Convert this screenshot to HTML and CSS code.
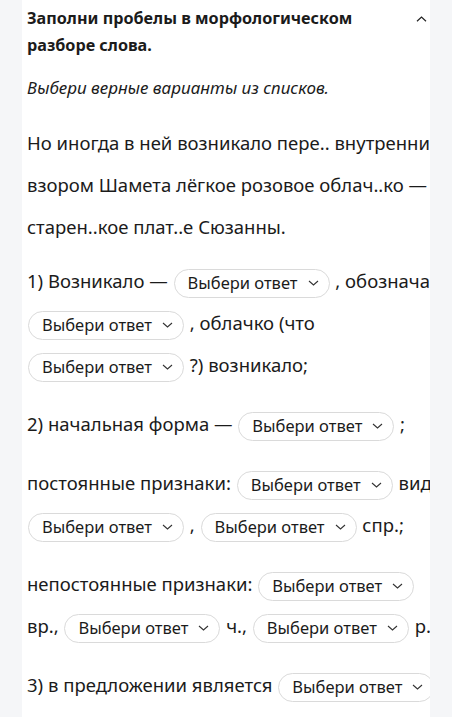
FILE: index.html
```html
<!DOCTYPE html>
<html lang="ru">
<head>
    <meta charset="UTF-8">
    <meta name="viewport" content="width=device-width, initial-scale=1.0">
    <title>Морфологический разбор</title>
    <link rel="stylesheet" href="styles.css">
</head>
<body>
    <div class="card">
        <div class="task-head">
            <h1 class="task-title">Заполни пробелы в морфологическом разборе слова.</h1>
            <svg class="toggle" width="11" height="6" viewBox="0 0 11 6"><path d="M1 5.2 L5.5 1 L10 5.2" fill="none" stroke="#222" stroke-width="1.2"/></svg>
        </div>
        <p class="hint">Выбери верные варианты из списков.</p>

        <div class="content">
            <p class="line first">Но иногда в ней возникало пере.. внутренним взором Шамета лёгкое розовое облач..ко — старен..кое плат..е Сюзанны.</p>

            <p class="line">1) Возникало — <span class="pick">Выбери ответ<svg width="11" height="6" viewBox="0 0 11 6"><path d="M1 1 L5.5 5 L10 1" fill="none" stroke="#333" stroke-width="1.1"/></svg></span> , обозначает <span class="pick">Выбери ответ<svg width="11" height="6" viewBox="0 0 11 6"><path d="M1 1 L5.5 5 L10 1" fill="none" stroke="#333" stroke-width="1.1"/></svg></span> , облачко (что <span class="pick">Выбери ответ<svg width="11" height="6" viewBox="0 0 11 6"><path d="M1 1 L5.5 5 L10 1" fill="none" stroke="#333" stroke-width="1.1"/></svg></span> ?) возникало;</p>

            <p class="line">2) начальная форма — <span class="pick">Выбери ответ<svg width="11" height="6" viewBox="0 0 11 6"><path d="M1 1 L5.5 5 L10 1" fill="none" stroke="#333" stroke-width="1.1"/></svg></span> ;</p>

            <p class="line">постоянные признаки: <span class="pick">Выбери ответ<svg width="11" height="6" viewBox="0 0 11 6"><path d="M1 1 L5.5 5 L10 1" fill="none" stroke="#333" stroke-width="1.1"/></svg></span> вида, <span class="pick">Выбери ответ<svg width="11" height="6" viewBox="0 0 11 6"><path d="M1 1 L5.5 5 L10 1" fill="none" stroke="#333" stroke-width="1.1"/></svg></span> , <span class="pick">Выбери ответ<svg width="11" height="6" viewBox="0 0 11 6"><path d="M1 1 L5.5 5 L10 1" fill="none" stroke="#333" stroke-width="1.1"/></svg></span> спр.;</p>

            <p class="line">непостоянные признаки: <span class="pick">Выбери ответ<svg width="11" height="6" viewBox="0 0 11 6"><path d="M1 1 L5.5 5 L10 1" fill="none" stroke="#333" stroke-width="1.1"/></svg></span> вр., <span class="pick">Выбери ответ<svg width="11" height="6" viewBox="0 0 11 6"><path d="M1 1 L5.5 5 L10 1" fill="none" stroke="#333" stroke-width="1.1"/></svg></span> ч., <span class="pick">Выбери ответ<svg width="11" height="6" viewBox="0 0 11 6"><path d="M1 1 L5.5 5 L10 1" fill="none" stroke="#333" stroke-width="1.1"/></svg></span> р.;</p>

            <p class="line">3) в предложении является <span class="pick">Выбери ответ<svg width="11" height="6" viewBox="0 0 11 6"><path d="M1 1 L5.5 5 L10 1" fill="none" stroke="#333" stroke-width="1.1"/></svg></span> .</p>
        </div>
    </div>
</body>
</html>
```

FILE: styles.css
```css
body {
    margin: 0;
    background: #f5f6f8;
    font-family: "Noto Sans", "Open Sans", sans-serif;
    color: #1b1b1b;
}

/* карточка задания */
.card {
    margin-left: 22px;
    width: 403px;
    padding-left: 5px;
    min-height: 100vh;
    background: #fff;
    overflow: hidden;
}

.task-head {
    display: flex;
    justify-content: space-between;
    align-items: flex-start;
    padding-top: 5px;
    padding-right: 3px;
}

.task-title {
    margin: 0;
    width: 350px;
    font-size: 16.2px;
    font-weight: bold;
    line-height: 27px;
}

.toggle {
    margin-top: 11px;
}

.hint {
    margin: 17px 0 0;
    font-size: 17px;
    font-style: italic;
    line-height: 24px;
}

/* текст с выпадающими списками */
.content {
    width: 424px;
    margin-top: 22px;
}

.line {
    margin: 0 0 17px;
    font-size: 18.5px;
    line-height: 42px;
}

.line.first {
    margin-bottom: 12px;
}

.pick {
    display: inline-flex;
    align-items: center;
    gap: 10px;
    height: 29px;
    margin: 0 1px;
    padding: 0 10px 0 13px;
    border: 1px solid #dadada;
    border-radius: 15px;
    box-sizing: border-box;
    font-size: 16.5px;
    line-height: 1;
    vertical-align: middle;
    background: #fff;
}
```
